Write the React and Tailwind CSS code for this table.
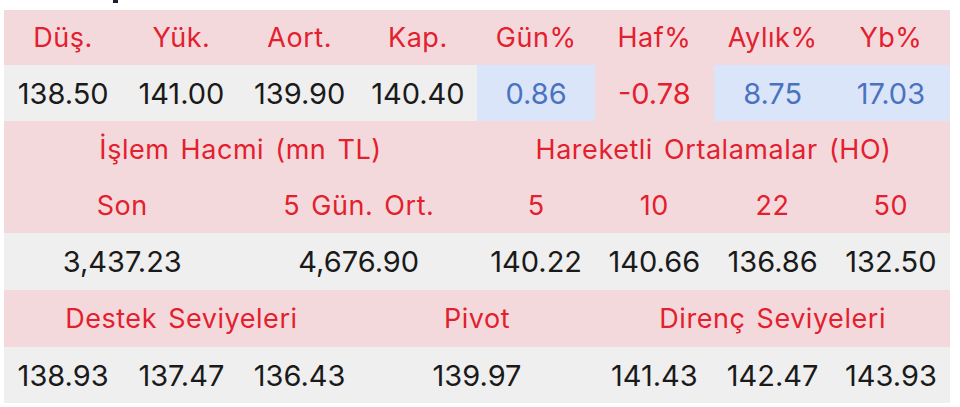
const head = 'flex items-center justify-center text-[#e3202e] text-[27px] tracking-[0.02em] [word-spacing:3px]';
const val = 'flex items-center justify-center text-[#1a1a1a] text-[29px]';
const blue = 'flex items-center justify-center bg-[#dbe5f9] text-[#4a73bf] text-[29px]';

const App = () => {
  return (
    <div className="w-[960px] h-[407px] bg-white overflow-hidden" style={{ fontFamily: 'Inter, "Noto Sans", sans-serif' }}>
      <div className="h-[10px]">
        <div className="ml-[113px] w-[5px] h-[3px] bg-[#1d1d2e]" />
      </div>
      <div className="ml-[4px] w-[946px] grid grid-cols-8 leading-none">
        {/* üst başlık */}
        <div className={`${head} bg-[#f3d9dc] h-[55px]`}>Düş.</div>
        <div className={`${head} bg-[#f3d9dc] h-[55px]`}>Yük.</div>
        <div className={`${head} bg-[#f3d9dc] h-[55px]`}>Aort.</div>
        <div className={`${head} bg-[#f3d9dc] h-[55px]`}>Kap.</div>
        <div className={`${head} bg-[#f3d9dc] h-[55px]`}>Gün%</div>
        <div className={`${head} bg-[#f3d9dc] h-[55px]`}>Haf%</div>
        <div className={`${head} bg-[#f3d9dc] h-[55px]`}>Aylık%</div>
        <div className={`${head} bg-[#f3d9dc] h-[55px]`}>Yb%</div>

        <div className={`${val} bg-[#efefef] h-[56px]`}>138.50</div>
        <div className={`${val} bg-[#efefef] h-[56px]`}>141.00</div>
        <div className={`${val} bg-[#efefef] h-[56px]`}>139.90</div>
        <div className={`${val} bg-[#efefef] h-[56px]`}>140.40</div>
        <div className={`${blue} h-[56px]`}>0.86</div>
        <div className="flex items-center justify-center text-[#e3202e] text-[29px] bg-[#f3d9dc] h-[56px]">-0.78</div>
        <div className={`${blue} h-[56px]`}>8.75</div>
        <div className={`${blue} h-[56px]`}>17.03</div>

        {/* hacim ve ortalamalar */}
        <div className={`${head} col-span-4 bg-[#f3d9dc] h-[56px]`}>İşlem Hacmi (mn TL)</div>
        <div className={`${head} col-span-4 bg-[#f3d9dc] h-[56px]`}>Hareketli Ortalamalar (HO)</div>

        <div className={`${head} col-span-2 bg-[#f3d9dc] h-[56px]`}>Son</div>
        <div className={`${head} col-span-2 bg-[#f3d9dc] h-[56px]`}>5 Gün. Ort.</div>
        <div className={`${head} bg-[#f3d9dc] h-[56px]`}>5</div>
        <div className={`${head} bg-[#f3d9dc] h-[56px]`}>10</div>
        <div className={`${head} bg-[#f3d9dc] h-[56px]`}>22</div>
        <div className={`${head} bg-[#f3d9dc] h-[56px]`}>50</div>

        <div className={`${val} col-span-2 bg-[#efefef] h-[57px]`}>3,437.23</div>
        <div className={`${val} col-span-2 bg-[#efefef] h-[57px]`}>4,676.90</div>
        <div className={`${val} bg-[#efefef] h-[57px]`}>140.22</div>
        <div className={`${val} bg-[#efefef] h-[57px]`}>140.66</div>
        <div className={`${val} bg-[#efefef] h-[57px]`}>136.86</div>
        <div className={`${val} bg-[#efefef] h-[57px]`}>132.50</div>

        {/* destek / direnç */}
        <div className={`${head} col-span-3 bg-[#f3d9dc] h-[57px]`}>Destek Seviyeleri</div>
        <div className={`${head} col-span-2 bg-[#f3d9dc] h-[57px]`}>Pivot</div>
        <div className={`${head} col-span-3 bg-[#f3d9dc] h-[57px]`}>Direnç Seviyeleri</div>

        <div className={`${val} bg-[#efefef] h-[56px]`}>138.93</div>
        <div className={`${val} bg-[#efefef] h-[56px]`}>137.47</div>
        <div className={`${val} bg-[#efefef] h-[56px]`}>136.43</div>
        <div className={`${val} col-span-2 bg-[#efefef] h-[56px]`}>139.97</div>
        <div className={`${val} bg-[#efefef] h-[56px]`}>141.43</div>
        <div className={`${val} bg-[#efefef] h-[56px]`}>142.47</div>
        <div className={`${val} bg-[#efefef] h-[56px]`}>143.93</div>
      </div>
    </div>
  );
};

export default App;
